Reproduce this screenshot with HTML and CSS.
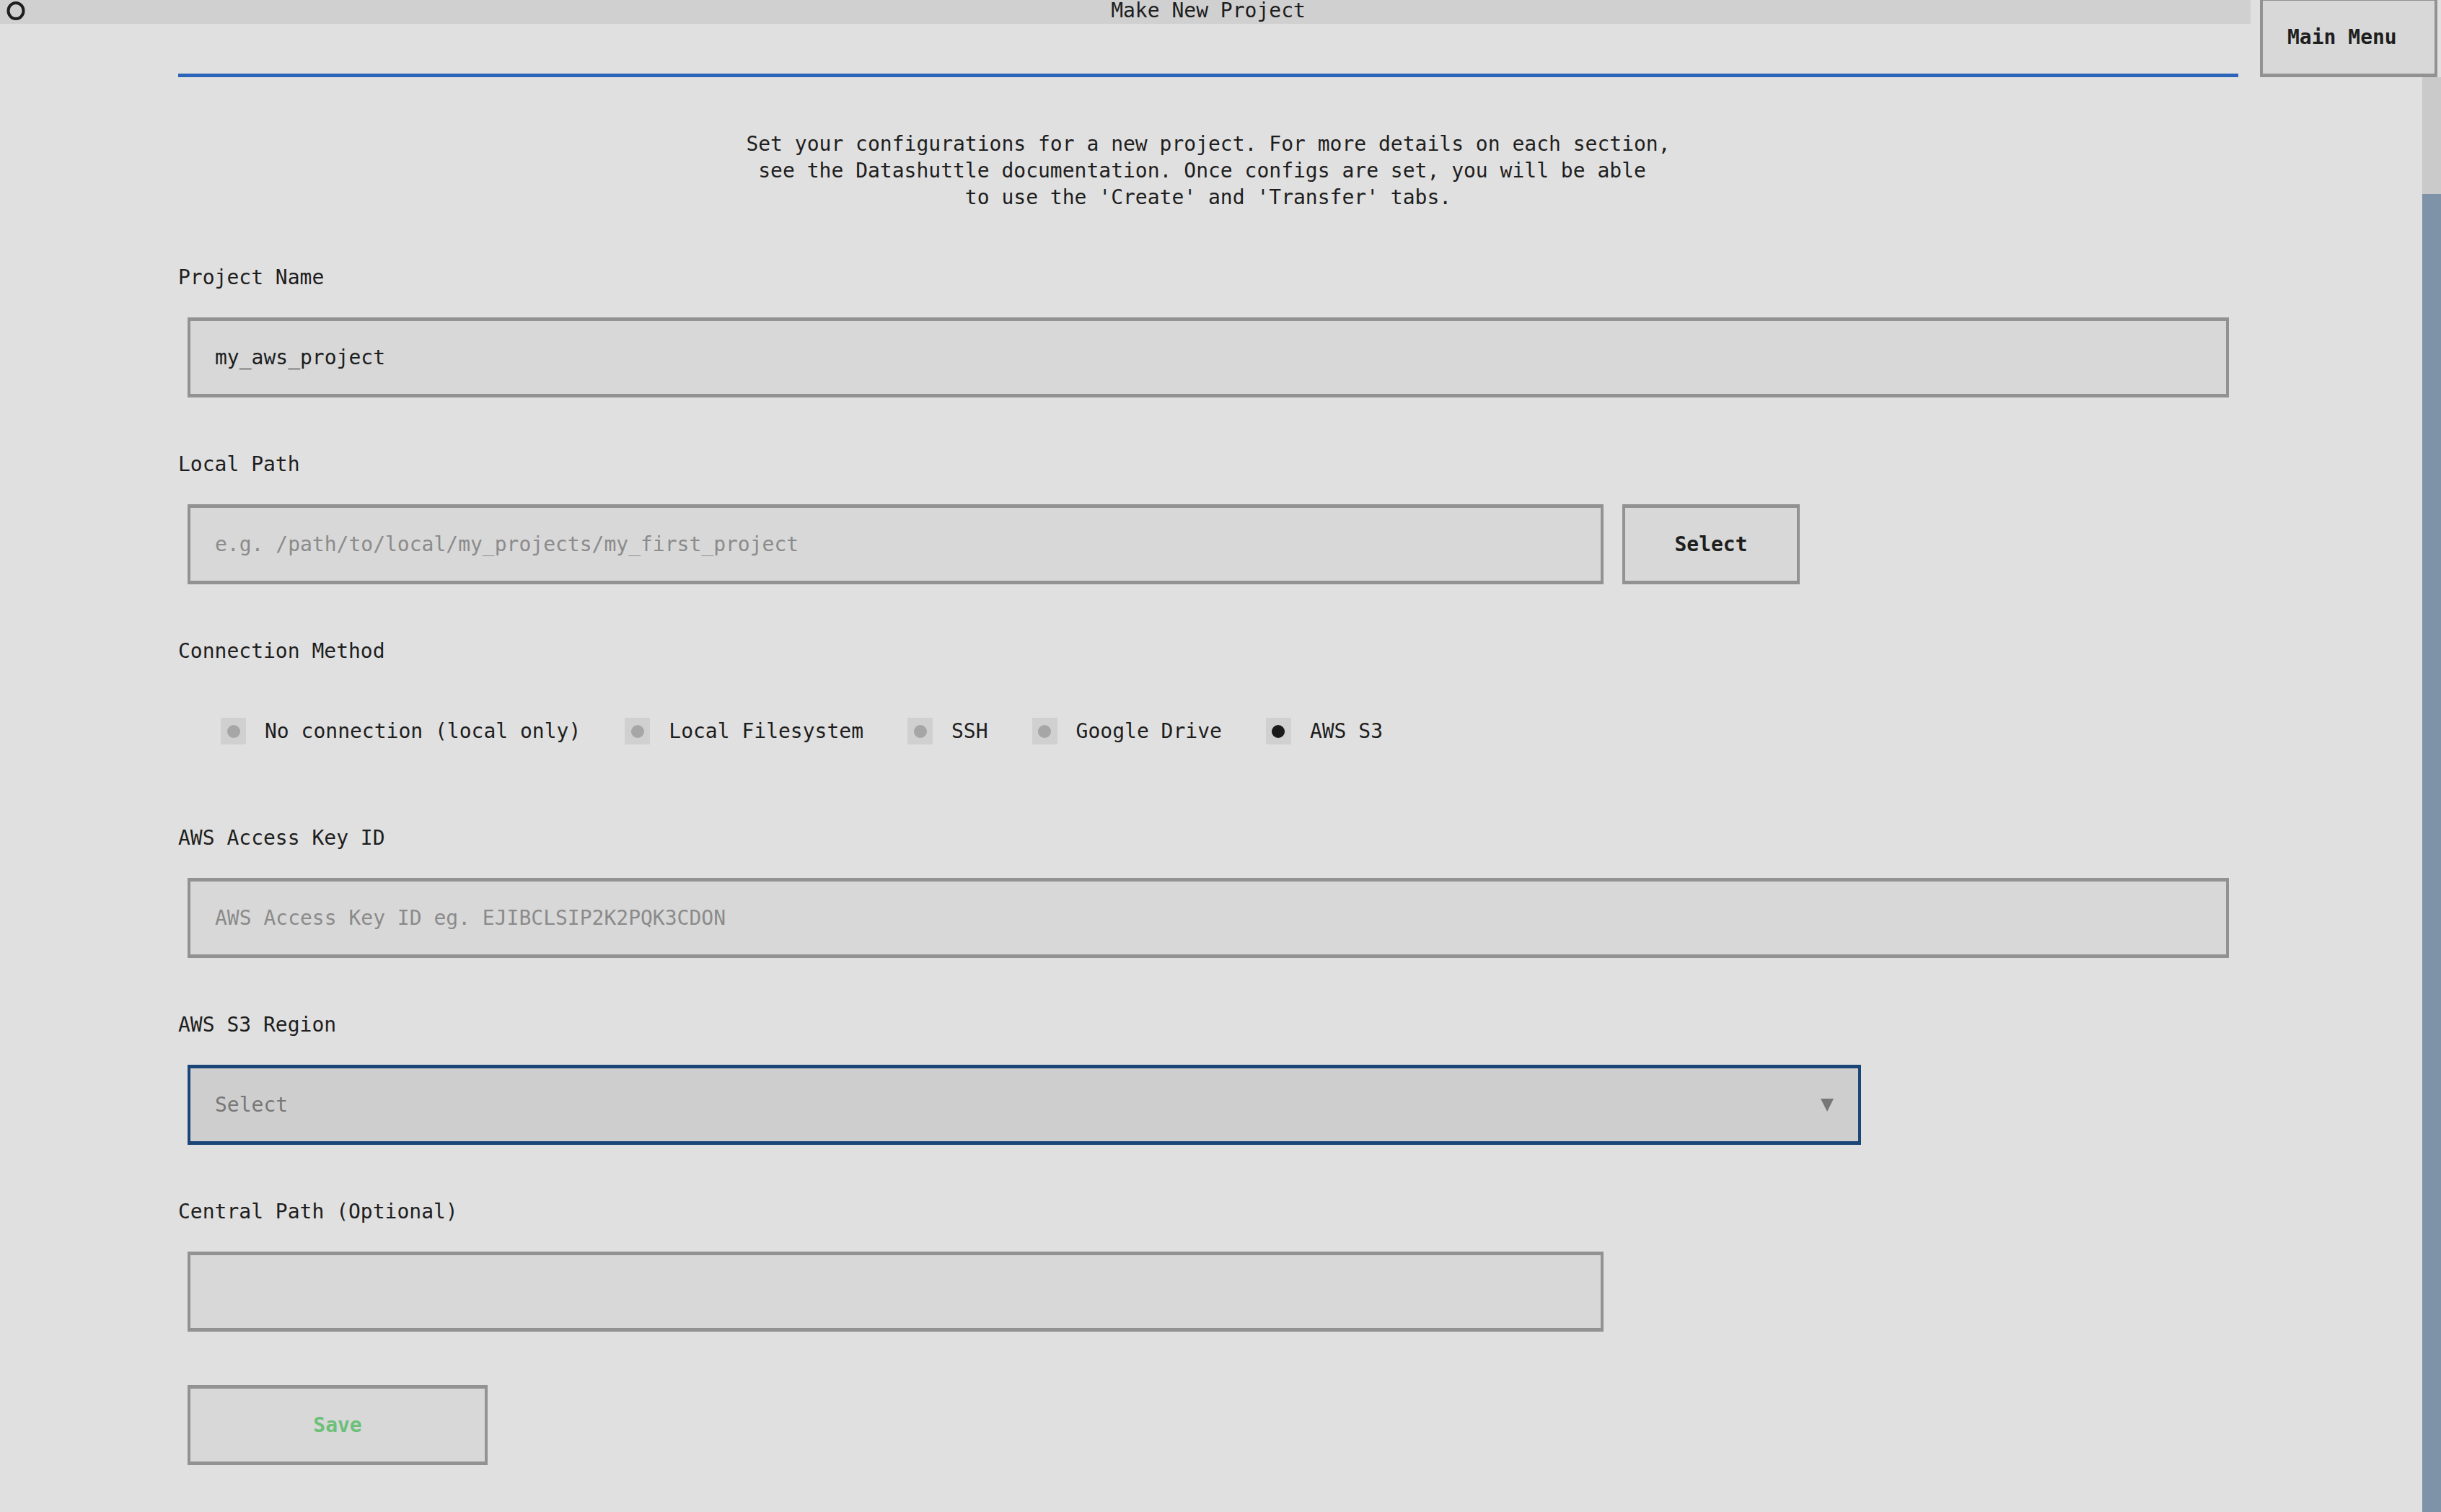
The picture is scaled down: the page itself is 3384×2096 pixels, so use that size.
FILE: index.html
```html
<!DOCTYPE html>
<html lang="en">
<head>
<meta charset="utf-8">
<meta name="viewport" content="width=device-width, initial-scale=1">
<title>Make New Project</title>
<link rel="stylesheet" href="styles.css">
</head>
<body>
<header class="header">
  <div class="header-main">
    <div class="title-bar">
      <button class="palette" type="button" aria-label="Command palette">
        <svg viewBox="0 0 28 28" aria-hidden="true"><ellipse cx="14" cy="14" rx="10.5" ry="11" fill="none" stroke="currentColor" stroke-width="4"/></svg>
      </button>
      <h1 class="title">Make New Project</h1>
    </div>
    <div class="tab-line"></div>
  </div>
  <button class="box button menu-button" type="button">Main Menu</button>
</header>
<div class="body">
  <main class="content">
    <p class="intro">Set your configurations for a new project. For more details on each section,<br>see the Datashuttle documentation. Once configs are set, you will be able&nbsp;<br>to use the 'Create' and 'Transfer' tabs.</p>
    <form class="form">
      <div class="field">
        <label for="name">Project Name</label>
        <div class="row"><input class="box text" id="name" type="text" value="my_aws_project" spellcheck="false"></div>
      </div>
      <div class="field">
        <label for="local">Local Path</label>
        <div class="row">
          <input class="box text path" id="local" type="text" placeholder="e.g. /path/to/local/my_projects/my_first_project">
          <button class="box button" type="button">Select</button>
        </div>
      </div>
      <fieldset class="field">
        <legend>Connection Method</legend>
        <div class="radios">
          <label class="radio"><input type="radio" name="method">No connection (local only)</label>
          <label class="radio"><input type="radio" name="method">Local Filesystem</label>
          <label class="radio"><input type="radio" name="method">SSH</label>
          <label class="radio"><input type="radio" name="method">Google Drive</label>
          <label class="radio"><input type="radio" name="method" checked>AWS S3</label>
        </div>
      </fieldset>
      <div class="field">
        <label for="key">AWS Access Key ID</label>
        <div class="row"><input class="box text" id="key" type="text" placeholder="AWS Access Key ID eg. EJIBCLSIP2K2PQK3CDON"></div>
      </div>
      <div class="field">
        <label for="region">AWS S3 Region</label>
        <div class="row">
          <div class="dropdown">
            <select class="box region" id="region"><option>Select</option></select>
            <svg class="arrow" viewBox="0 0 18 18" aria-hidden="true"><path d="M0 0h18L9 18z" fill="currentColor"/></svg>
          </div>
        </div>
      </div>
      <div class="field">
        <label for="central">Central Path (Optional)</label>
        <div class="row"><input class="box text path" id="central" type="text"></div>
      </div>
      <div class="row"><button class="box button save" type="submit">Save</button></div>
    </form>
  </main>
  <div class="scrollbar"><div class="thumb"></div></div>
</div>
</body>
</html>
```
FILE: styles.css
```css
* {
  box-sizing: border-box;
}

body {
  margin: 0;
  min-height: 100vh;
  display: flex;
  flex-direction: column;
  background: #e0e0e0;
  color: #1e1e1e;
  font: 28px/37px "DejaVu Sans Mono", "Liberation Mono", monospace;
}

button,
input,
select {
  margin: 0;
  font: inherit;
  color: inherit;
}

/* Header */
.header {
  display: flex;
  align-items: flex-end;
  gap: 13px;
  height: 107px;
  padding-right: 5px;
}

.header-main {
  flex: 1;
  height: 100%;
  display: flex;
  flex-direction: column;
  justify-content: space-between;
}

.title-bar {
  display: flex;
  align-items: flex-end;
  height: 33px;
  background: #d0d0d0;
}

.palette {
  width: 230px;
  height: 33px;
  padding: 0 8px 3px;
  border: 0;
  background: none;
  text-align: left;
}

.palette svg {
  display: block;
  width: 28px;
  height: 28px;
}

.title {
  flex: 1;
  margin: 0;
  font: inherit;
  text-align: center;
}

.tab-line {
  height: 5px;
  margin: 0 17px 0 247px;
  background: #2b64b9;
}

/* Boxed controls */
.box {
  height: 111px;
  padding: 0 34px;
  border: solid #929292;
  border-width: 5px 4px;
  border-radius: 0;
  background: #d8d8d8;
  outline: 0;
}

.button {
  width: 246px;
  font-weight: bold;
  text-align: center;
}

.menu-button {
  text-align: left;
  white-space: nowrap;
}

.text {
  flex: 1;
  min-width: 0;
}

.text::placeholder {
  color: #8b8b8b;
  opacity: 1;
}

.path {
  max-width: 1963px;
}

.save {
  width: 416px;
  color: #6cc07a;
}

/* Page body */
.body {
  flex: 1;
  display: flex;
}

.content {
  flex: 1;
  padding: 74px 255px 65px 247px;
}

.intro {
  margin: 0 0 74px;
  text-align: center;
}

.form {
  display: flex;
  flex-direction: column;
  gap: 74px;
}

.field {
  display: flex;
  flex-direction: column;
  gap: 37px;
  min-width: 0;
  margin: 0;
  padding: 0;
  border: 0;
}

legend {
  margin-bottom: 37px;
  padding: 0;
}

.row {
  display: flex;
  gap: 26px;
  padding: 0 13px;
}

.radios {
  display: flex;
  align-items: center;
  gap: 61px;
  height: 111px;
  padding-left: 59px;
}

.radio {
  display: flex;
  gap: 26px;
  white-space: nowrap;
}

.radio input {
  appearance: none;
  display: grid;
  place-items: center;
  width: 35px;
  height: 37px;
  background: #d0d0d0;
  color: #a6a6a6;
}

.radio input:checked {
  color: #1a1a1a;
}

.radio input::before {
  content: "";
  width: 18px;
  height: 18px;
  border-radius: 50%;
  background: currentColor;
}

.dropdown {
  flex: 1;
  max-width: 2320px;
  display: grid;
  align-items: center;
  color: #777777;
}

.region {
  grid-area: 1 / 1;
  width: 100%;
  appearance: none;
  background: #cecece;
  border-color: #1a4577;
}

.arrow {
  grid-area: 1 / 1;
  justify-self: end;
  width: 18px;
  height: 18px;
  margin-right: 38px;
  pointer-events: none;
}

/* Scrollbar */
.scrollbar {
  width: 26px;
  display: flex;
  padding-top: 162px;
  background: #cacaca;
}

.thumb {
  flex: 1;
  background: #7e92a8;
}
```
